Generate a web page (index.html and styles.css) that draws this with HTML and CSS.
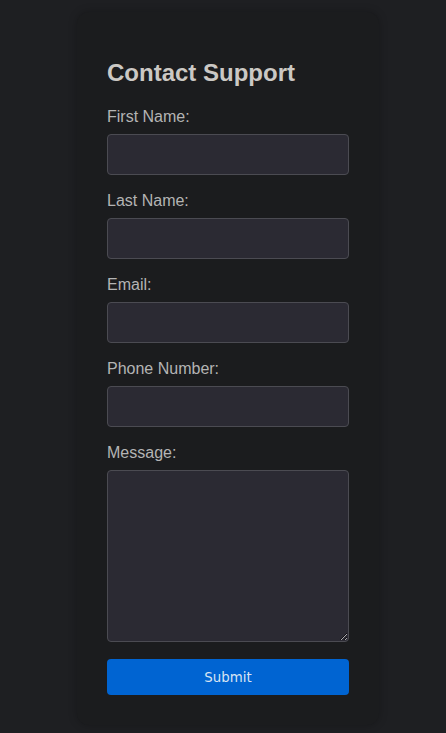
FILE: index.html
```html
<!DOCTYPE html>
<html lang="en">
<head>
    <meta charset="UTF-8">
    <meta name="viewport" content="width=device-width, initial-scale=1.0">
    <title>Contact Support</title>
    <link rel="stylesheet" href="styles.css">
</head>
<body>
    <div class="card">
        <h2>Contact Support</h2>
        <form onsubmit="event.preventDefault();">
            <label for="first">First Name:</label>
            <input type="text" id="first" class="field">

            <label for="last">Last Name:</label>
            <input type="text" id="last" class="field">

            <label for="email">Email:</label>
            <input type="email" id="email" class="field">

            <label for="phone">Phone Number:</label>
            <input type="tel" id="phone" class="field">

            <label for="message">Message:</label>
            <textarea id="message" class="field message"></textarea>

            <button type="submit" class="submit">Submit</button>
        </form>
    </div>
</body>
</html>
```

FILE: styles.css
```css
/* Page */
body {
    margin: 0;
    padding: 12px 0 8px 10px;
    display: flex;
    justify-content: center;
    align-items: flex-start;
    background: #1e1f22;
    font-family: "Liberation Sans", Arial, sans-serif;
    color-scheme: dark;
}
.card {
    width: 242px;
    padding: 30px;
    background: #1b1c1e;
    border-radius: 12px;
    box-shadow: 0 0 8px rgba(0, 0, 0, 0.25);
}
.card h2 {
    margin: 17px 0 21px;
    font-size: 24px;
    font-weight: bold;
    color: #cbc8c4;
}
label {
    display: block;
    margin-bottom: 8px;
    font-size: 16px;
    color: #b4b4b4;
}
.field {
    display: block;
    box-sizing: border-box;
    width: 100%;
    height: 41px;
    margin: 0 0 17px;
    padding: 10px;
    background: #2b2a33;
    border: 1px solid #4b4b52;
    border-radius: 4px;
    color: #ddd;
    font-size: 16px;
    font-family: "Liberation Sans", Arial, sans-serif;
}
.message {
    height: 172px;
}
.submit {
    display: block;
    width: 100%;
    height: 36px;
    margin-top: 17px;
    border: none;
    border-radius: 4px;
    background: #0064d2;
    color: #d9e4f3;
    font-family: "DejaVu Sans", sans-serif;
    font-size: 13.33px;
    cursor: pointer;
}
```
